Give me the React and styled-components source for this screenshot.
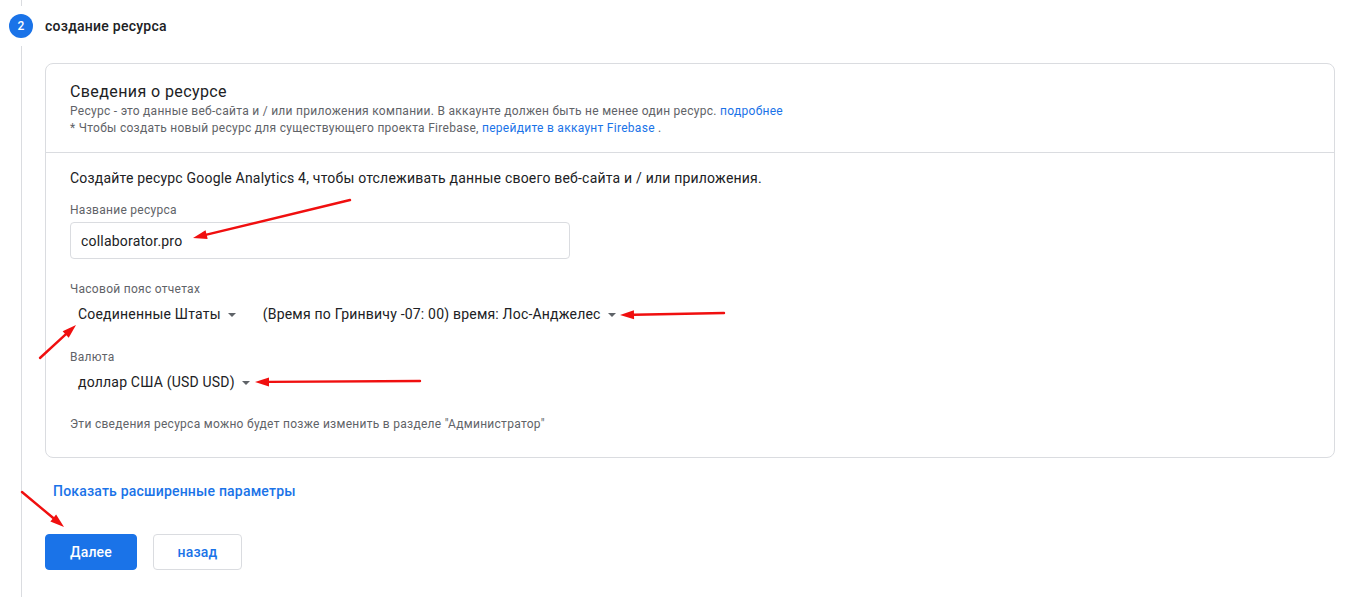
import React from "react";
import styled, { createGlobalStyle } from "styled-components";

const GlobalStyle = createGlobalStyle`
    html, body {
        margin:0;
        padding:0;
        background:#fff;
        font-family:Roboto, "Liberation Sans", Arial, sans-serif;
        color:#202124;
    }
`;

const Page = styled.div`
    position:relative;
    display:flex;
    width:1367px;
    height:597px;
    overflow:hidden;
`;

const Rail = styled.div`
    width:45px;
    flex-shrink:0;
    display:flex;
    flex-direction:column;
    align-items:center;
    padding-right:3px;
    box-sizing:border-box;
`;

const RailLine = styled.div`
    width:1px;
    background:#dadce0;
    height:${(p) => (p.$grow ? "auto" : p.$h + "px")};
    flex:${(p) => (p.$grow ? 1 : "none")};
`;

const StepCircle = styled.div`
    width:24px;
    height:24px;
    border-radius:50%;
    background:#1a73e8;
    color:#fff;
    font-size:12px;
    font-weight:500;
    display:flex;
    align-items:center;
    justify-content:center;
    margin:8px 0;
`;

const Content = styled.div`
    flex:1;
    padding-right:32px;
    display:flex;
    flex-direction:column;
`;

const StepTitle = styled.div`
    height:52px;
    display:flex;
    align-items:center;
    font-size:14px;
    font-weight:500;
    letter-spacing:0.25px;
    color:#202124;
`;

const Card = styled.div`
    margin-top:11px;
    border:1px solid #dadce0;
    border-radius:8px;
`;

const CardHeader = styled.div`
    padding:17px 24px 15px;
    border-bottom:1px solid #dadce0;
`;

const CardTitle = styled.div`
    font-size:16px;
    line-height:22px;
    letter-spacing:0.4px;
    color:#202124;
`;

const Note = styled.div`
    font-size:12px;
    line-height:17px;
    letter-spacing:0.28px;
    color:#5f6368;
`;

const Link = styled.a`
    color:#1a73e8;
    text-decoration:none;
    cursor:pointer;
`;

const CardBody = styled.div`
    padding:15px 24px 25px;
    display:flex;
    flex-direction:column;
    align-items:flex-start;
`;

const Lead = styled.div`
    font-size:14px;
    line-height:20px;
    letter-spacing:0.2px;
    color:#202124;
`;

const Label = styled.div`
    font-size:12px;
    line-height:16px;
    letter-spacing:0.28px;
    color:#5f6368;
    margin-top:${(p) => p.$mt}px;
`;

const TextInput = styled.input`
    margin-top:4px;
    width:500px;
    height:37px;
    box-sizing:border-box;
    border:1px solid #dadce0;
    border-radius:4px;
    padding:0 10px;
    font-family:inherit;
    font-size:14px;
    letter-spacing:0.2px;
    color:#202124;
    outline:none;
`;

const SelectRow = styled.div`
    display:flex;
    gap:11px;
    margin-top:1px;
`;

const Select = styled.div`
    height:32px;
    display:flex;
    align-items:center;
    gap:7px;
    padding:0 8px;
    font-size:14px;
    letter-spacing:0.2px;
    color:#202124;
    cursor:pointer;
`;

const Caret = styled.span`
    width:0;
    height:0;
    border-left:4px solid transparent;
    border-right:4px solid transparent;
    border-top:4px solid #5f6368;
    margin-top:1px;
`;

const AdvancedLink = styled(Link)`
    display:block;
    margin-top:23px;
    padding-left:8px;
    font-size:14px;
    line-height:20px;
    font-weight:500;
    letter-spacing:0.2px;
`;

const Buttons = styled.div`
    display:flex;
    gap:16px;
    margin-top:33px;
`;

const Button = styled.button`
    height:36px;
    width:${(p) => p.$w}px;
    border-radius:4px;
    font-family:inherit;
    font-size:14px;
    font-weight:500;
    letter-spacing:0.2px;
    cursor:pointer;
    border:1px solid ${(p) => (p.$primary ? "#1a73e8" : "#dadce0")};
    background:${(p) => (p.$primary ? "#1a73e8" : "#fff")};
    color:${(p) => (p.$primary ? "#fff" : "#1a73e8")};
`;

const Arrows = styled.svg`
    position:absolute;
    left:0;
    top:0;
    pointer-events:none;
`;

const arrows = [
    [350, 200, 193, 238],
    [724, 313, 620, 315],
    [40, 358, 76, 325],
    [420, 381, 255, 382],
    [22, 492, 64, 527],
];

const Arrow = ({ x1, y1, x2, y2 }) => {
    const a = Math.atan2(y2 - y1, x2 - x1);
    const len = 14;
    const w = 4.5;
    const bx = x2 - Math.cos(a) * len;
    const by = y2 - Math.sin(a) * len;
    const px = -Math.sin(a) * w;
    const py = Math.cos(a) * w;
    return (
        <g>
            <line x1={x1} y1={y1} x2={bx} y2={by} stroke="#f00f0f" strokeWidth="2.4" strokeLinecap="round" />
            <polygon points={`${x2},${y2} ${bx + px},${by + py} ${bx - px},${by - py}`} fill="#f00f0f" />
        </g>
    );
};

export default function App() {
    return (
        <>
            <GlobalStyle />
            <Page>
                <Rail>
                    <RailLine $h={6} />
                    <StepCircle>2</StepCircle>
                    <RailLine $grow />
                </Rail>
                <Content>
                    <StepTitle>создание ресурса</StepTitle>
                    <Card>
                        <CardHeader>
                            <CardTitle>Сведения о ресурсе</CardTitle>
                            <Note>
                                Ресурс - это данные веб-сайта и / или приложения компании. В аккаунте должен быть не менее один ресурс. <Link>подробнее</Link>
                            </Note>
                            <Note>
                                * Чтобы создать новый ресурс для существующего проекта Firebase, <Link>перейдите в аккаунт Firebase</Link> .
                            </Note>
                        </CardHeader>
                        <CardBody>
                            <Lead>Создайте ресурс Google Analytics 4, чтобы отслеживать данные своего веб-сайта и / или приложения.</Lead>
                            <Label $mt={14}>Название ресурса</Label>
                            <TextInput defaultValue="collaborator.pro" />
                            <Label $mt={22}>Часовой пояс отчетах</Label>
                            <SelectRow>
                                <Select>Соединенные Штаты <Caret /></Select>
                                <Select>(Время по Гринвичу -07: 00) время: Лос-Анджелес <Caret /></Select>
                            </SelectRow>
                            <Label $mt={19}>Валюта</Label>
                            <SelectRow>
                                <Select>доллар США (USD USD) <Caret /></Select>
                            </SelectRow>
                            <Label $mt={18}>Эти сведения ресурса можно будет позже изменить в разделе "Администратор"</Label>
                        </CardBody>
                    </Card>
                    <AdvancedLink>Показать расширенные параметры</AdvancedLink>
                    <Buttons>
                        <Button $primary $w={92}>Далее</Button>
                        <Button $w={89}>назад</Button>
                    </Buttons>
                </Content>
                <Arrows width="1367" height="597">
                    {arrows.map(([x1, y1, x2, y2], i) => (
                        <Arrow key={i} x1={x1} y1={y1} x2={x2} y2={y2} />
                    ))}
                </Arrows>
            </Page>
        </>
    );
}
